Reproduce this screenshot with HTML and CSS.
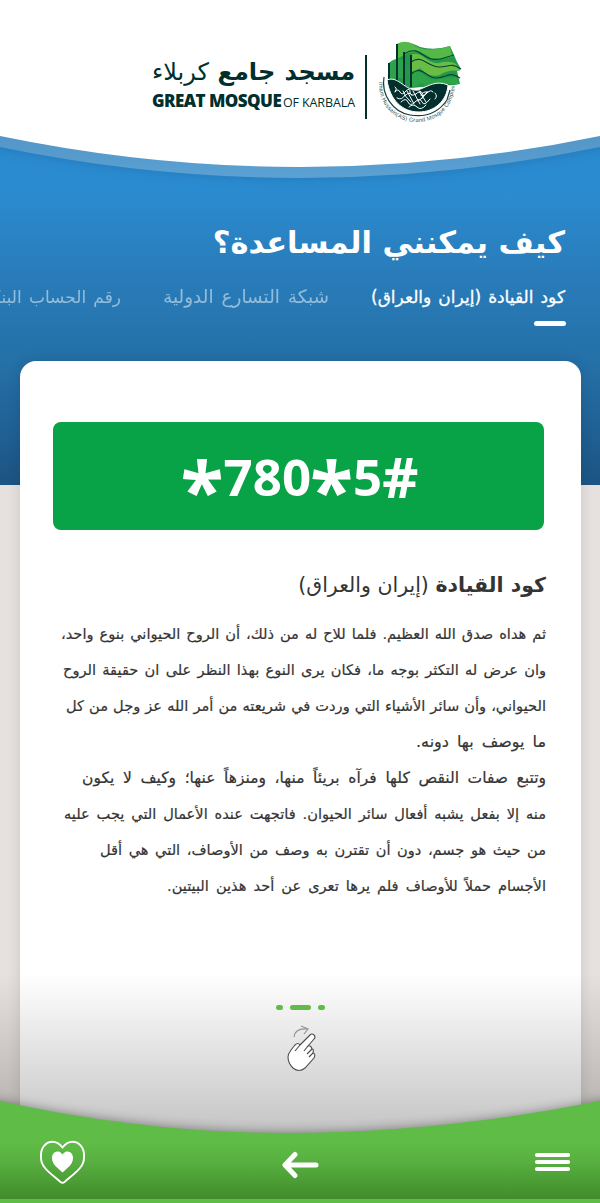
FILE: index.html
```html
<!DOCTYPE html>
<html lang="ar" dir="rtl">
<head>
<meta charset="utf-8">
<title>مسجد جامع كربلاء</title>
<link rel="stylesheet" href="styles.css">
</head>
<body>
<div class="screen">
  <div class="hero">
    <svg class="hero-curve" viewBox="0 0 600 200" aria-hidden="true">
      <defs>
        <linearGradient id="band" x1="0" y1="0" x2="0" y2="1"><stop offset=".75" stop-color="#5395c6"/><stop offset="1" stop-color="#5ba1d4"/></linearGradient>
        <filter id="soft" x="-5%" y="-5%" width="110%" height="120%"><feGaussianBlur stdDeviation="5"/></filter>
      </defs>
      <path d="M-10 0H610V148Q300 212 -10 148Z" fill="#1b639d" opacity=".35" filter="url(#soft)"/>
      <path d="M0 0H600V147Q450 178 300 178Q150 178 0 147Z" fill="url(#band)"/>
      <path d="M0 0H600V136Q450 167 300 167Q150 167 0 136Z" fill="#fff"/>
    </svg>
    <header class="brand">
      <svg class="emblem" viewBox="0 0 100 95" role="img" aria-label="Great Mosque">
        <path d="M27 9C37 5 43 9 50 12Q64 16 80 11L84 20L87 27L91 34L87 36L90 49Q82 51 74 50L41 53H19V28L27 24Z" fill="#24984a"/>
        <path d="M27 9C36 4 41 8 49 13Q62 17 80 11L82 21Q72 26 61 23Q47 13 34 20L27 24Z" fill="#55b948"/>
        <path d="M19 28Q26 21 34 26V44Q27 41 19 47Z" fill="#2ba24c"/>
        <path d="M41 20C51 14 58 30 69 28Q80 25 86 29L90 36Q78 34 70 40Q58 43 50 33L41 38Z" fill="#69bd45"/>
        <path d="M41 37C52 31 55 48 68 44L86 42L89 49H75Q60 55 52 48L41 53Z" fill="#2da448"/>
        <g fill="none" stroke="#064336" stroke-width="1.1">
          <path d="M34 19C48 10 52 22 61 24S75 22 84 20"/><path d="M41 27C52 19 58 32 69 32S80 27 91 34"/><path d="M41 39C53 29 56 44 67 43S79 36 90 43"/>
        </g>
        <path d="M19 28V50M27 9V50M34 17V50M41 20V52" stroke="#03322d" stroke-width="2"/>
        <path d="M17 45C28 40 36 57 48 55C59 51 66 45 78 50C77 66 64 77 49 77C32 77 20 65 17 45Z" fill="#002f2d" stroke="#fff" stroke-width="1"/>
        <g fill="none" stroke="#fff" stroke-linecap="round" stroke-width="1">
          <path d="M25 57q3-4 5 0t6-1q4-4 4 1t6 2q4-4 5 0t6-1q4-4 6-1"/>
          <path d="M27 63q5 3 8-3m-2-4q2 6 8 11m-4-11 7 13m-1-13 7 13m-1-13 7 11m1-10q-4 7-9 9"/>
          <path d="M31 67q5-5 7 0t7 0q5-5 7 0t8-3M39 72q4-4 8 0t9-2M50 56q5 3 2 7m13-5q3 3 0 6M25 52q3 2 0 4m11 4q3-4 6 0m9 0q2-4 7-3"/>
        </g>
        <path d="M14 42C11 60 23 77 40 80Q64 84 77 65L80 55" fill="none" stroke="#173f3a" stroke-width="1.2"/>
        <path id="rim" d="M9 47C8 70 25 87 47 87C67 87 84 73 85 48" fill="none"/>
        <text class="emblem-text" direction="ltr" textLength="120"><textPath href="#rim">Imam Hussain(AS) Grand Mosque Complex</textPath></text>
      </svg>
      <i class="brand-rule"></i>
      <div class="brand-name">
        <div class="brand-ar fit"><b>مسجد جامع</b> <span>كربلاء</span></div>
        <div class="brand-en" dir="ltr"><b>GREAT MOSQUE</b><span>OF KARBALA</span></div>
      </div>
    </header>
    <h1 class="title fit">كيف يمكنني المساعدة؟</h1>
    <nav class="tabs">
      <a class="tab tab-active"><span class="fit tab-a">كود القيادة (إيران والعراق)</span></a>
      <a class="tab"><span class="fit tab-b">شبكة التسارع الدولية</span></a>
      <a class="tab"><span class="fit tab-c">رقم الحساب البنكي</span></a>
    </nav>
  </div>
  <main class="card">
    <div class="code" dir="ltr"><span class="star">*</span>780<span class="star">*</span>5<span class="hash">#</span></div>
    <h2 class="subtitle fit"><b>كود القيادة</b> <span>(إيران والعراق)</span></h2>
    <div class="copy">
      <p><span class="line w485">ثم هداه صدق الله العظيم. فلما للاح له من ذلك، أن الروح الحيواني بنوع واحد،</span>
      <span class="line w483">وان عرض له التكثر بوجه ما، فكان يرى النوع بهذا النظر على ان حقيقة الروح</span>
      <span class="line w480">الحيواني، وأن سائر الأشياء التي وردت في شريعته من أمر الله عز وجل من كل</span>
      <span class="line w130">ما يوصف بها دونه.</span></p>
      <p><span class="line w464">وتتبع صفات النقص كلها فرآه بريئاً منها، ومنزهاً عنها؛ وكيف لا يكون</span>
      <span class="line w482">منه إلا بفعل يشبه أفعال سائر الحيوان. فاتجهت عنده الأعمال التي يجب عليه</span>
      <span class="line w446">من حيث هو جسم، دون أن تقترن به وصف من الأوصاف، التي هي أقل</span>
      <span class="line w379">الأجسام حملاً للأوصاف فلم يرها تعرى عن أحد هذين البيتين.</span></p>
    </div>
  </main>
  <div class="shade">
    <div class="dots"><i></i><i class="long"></i><i></i></div>
    <svg class="hand" viewBox="0 0 30 48" aria-hidden="true">
      <path d="M7 13Q8 4 20 5M14 2L21 5L17 10" fill="none" stroke="#929699" stroke-width="1.2"/>
      <path d="M14 20L23 11Q25 9 27 11T27 15L21 22Q24 21 25 25Q27 25 26 29Q29 30 27 34L18 44Q12 49 6 44Q1 39 1 33Q1 30 4 26L8 21Q11 18 13 21Z" fill="#fff" stroke="#4b4d4f" stroke-width="1.1"/>
      <path d="M13 21L8 27M21 22L17 27M25 25L20 30M26 29L22 33" fill="none" stroke="#4b4d4f" stroke-width="1.1"/>
    </svg>
  </div>
  <footer class="bar">
    <svg class="bar-curve" viewBox="0 0 600 122" aria-hidden="true">
      <defs>
        <linearGradient id="green" gradientUnits="userSpaceOnUse" x1="0" y1="62" x2="0" y2="118"><stop offset="0" stop-color="#5fbc46"/><stop offset=".35" stop-color="#57af3f"/><stop offset="1" stop-color="#418c2c"/></linearGradient>
        <filter id="lift" x="-5%" y="-20%" width="110%" height="140%"><feGaussianBlur stdDeviation="6"/></filter>
      </defs>
      <path d="M-10 19Q145 52 285 52Q450 52 610 19V122H-10Z" fill="#000" opacity=".4" filter="url(#lift)"/>
      <path d="M0 20Q145 52 285 52Q440 52 600 20V122H0Z" fill="url(#green)"/>
      <path d="M0 118H600V122H0Z" fill="#5fbc46"/>
    </svg>
    <svg class="menu" viewBox="0 0 36 20" aria-label="menu"><path d="M3 3H34M3 10H34M3 17H34" stroke="#fff" stroke-width="4.2" stroke-linecap="round"/></svg>
    <svg class="back" viewBox="0 0 38 28" aria-label="back"><path d="M35 14H4M14 3.5L4 14L14 24.5" fill="none" stroke="#fff" stroke-width="5" stroke-linecap="round" stroke-linejoin="round"/></svg>
    <svg class="heart" viewBox="0 0 46 44" aria-label="favourites">
      <path d="M23.5 7.5C20 3 17 1.8 13.500 1.8C7 1.8 2 7.500 2 15V18C2 22 3.500 25 6 28C10 33 16 37 21.500 42Q23.500 43.500 25.500 42C31 37 37 33 41 28C43.500 25 45 22 45 18V15C45 7.500 40 1.8 33.500 1.8C30 1.8 27 3 23.500 7.500Z" fill="none" stroke="#fff" stroke-width="1.9"/>
      <path d="M23.5 14.5C21.5 12 20 11.5 18.5 11.5C15 11.5 13 14.5 13 18C13 22 15 25 18 27.5L23.5 32.5L29 27.5C32 25 34 22 34 18C34 14.5 32 11.5 28.5 11.5C27 11.5 25.5 12 23.5 14.5Z" fill="#fff"/>
    </svg>
  </footer>
</div>
</body>
</html>
```
FILE: styles.css
```css
* { box-sizing: border-box; }
body { margin: 0; background: #e6e1de; font-family: "DejaVu Sans", sans-serif; color: #343434; }
.screen { position: relative; width: 600px; height: 1203px; overflow: hidden; }
.fit, .line { display: block; white-space: nowrap; text-align: justify; text-align-last: justify; }
.hero { position: relative; height: 485px; overflow: hidden; color: #fff; background: linear-gradient(#2b8bd0 190px, #297dbb 270px, #246fa6 370px, #1c5483 485px); }
.hero-curve { position: absolute; top: 0; left: 0; width: 600px; height: 200px; }
.brand { position: relative; display: flex; height: 210px; padding: 35px 130px 0 0; color: #002f2d; }
.emblem { width: 100px; height: 95px; flex: none; }
.emblem-text { font: 5.7px "Liberation Sans", sans-serif; fill: #27504b; }
.brand-rule { width: 2px; height: 64px; margin: 20px 3px 0 10px; background: #002f2d; }
.brand-name { width: 203px; padding-top: 20px; }
.brand-ar { width: 203px; height: 35px; font-size: 24px; line-height: 34px; }
.brand-en { display: flex; justify-content: space-between; align-items: baseline; font-family: "Open Sans", sans-serif; white-space: nowrap; line-height: 22px; }
.brand-en b { font-size: 17px; font-weight: 800; letter-spacing: -.55px; }
.brand-en span { font-size: 12.5px; letter-spacing: -.1px; }
.title { position: relative; width: 351px; height: 60px; margin: 7px 35px 3px 0; font-size: 30.5px; line-height: 52px; }
.tabs { display: flex; gap: 42px; padding-right: 35px; font-size: 17px; line-height: 34px; }
.tab { flex: none; opacity: .5; }
.tab-active { opacity: 1; -webkit-text-stroke: .3px #fff; }
.tab-active::after { content: ""; display: block; width: 32px; height: 5px; margin: 7px -1px 0 0; border-radius: 3px; background: #fff; }
.tab-a { width: 194px; }
.tab-b { width: 166px; font-size: 18.5px; }
.tab-c { width: 143px; }
.card { position: relative; width: 561px; height: 842px; margin: -124px 19px 0 0; padding: 61px 35px 0 33px; border-radius: 16px 16px 0 0; background: #fff; box-shadow: 0 0 14px rgba(0,0,0,.12); }
.code { display: flex; align-items: center; justify-content: center; width: 491px; height: 108px; margin-right: 2px; padding-left: 3px; border-radius: 8px; background: #08a247; color: #fff; font: 700 51px/108px "Open Sans", sans-serif; }
.star { width: 42px; height: 108px; font-size: 79px; line-height: 133px; margin: 0 1px 0 -1px; }
.hash { font-size: 56px; line-height: 106px; }
.subtitle { width: 247px; height: 50px; margin: 36px 0 0; font-size: 20.5px; line-height: 38px; font-weight: 400; }
.copy p { margin: 0; font-size: 14.6px; line-height: 36px; -webkit-text-stroke: .2px #343434; }
.w485 { width: 485px; }
.w483 { width: 483px; }
.w480 { width: 480px; }
.w130 { width: 130px; font-size: 16px; }
.w464 { width: 464px; font-size: 15.5px; }
.w482 { width: 482px; }
.w446 { width: 446px; }
.w379 { width: 379px; }
.shade { position: absolute; top: 973px; left: 0; width: 600px; height: 230px; padding-top: 32px; display: flex; flex-direction: column; align-items: center; background: linear-gradient(rgba(0,0,0,0), rgba(0,0,0,.23) 160px); }
.dots { display: flex; gap: 7px; }
.dots i { width: 7px; height: 5px; border-radius: 3px; background: #5fbc46; }
.dots .long { width: 21px; }
.hand { width: 30px; height: 48px; margin: 14px 0 0 0; transform: translateX(2px); }
.bar { position: absolute; left: 0; top: 1081px; width: 600px; height: 122px; display: grid; grid-template-columns: 1fr 38px 1fr; align-items: start; padding: 59px 30px 0 39px; }
.bar-curve { position: absolute; top: 0; left: 0; width: 600px; height: 122px; overflow: visible; }
.menu, .back, .heart { position: relative; }
.menu { width: 36px; height: 20px; margin-top: 12px; }
.back { width: 38px; height: 28px; margin-top: 11px; transform: translateX(-5px); }
.heart { width: 46px; height: 44px; justify-self: end; }
```
